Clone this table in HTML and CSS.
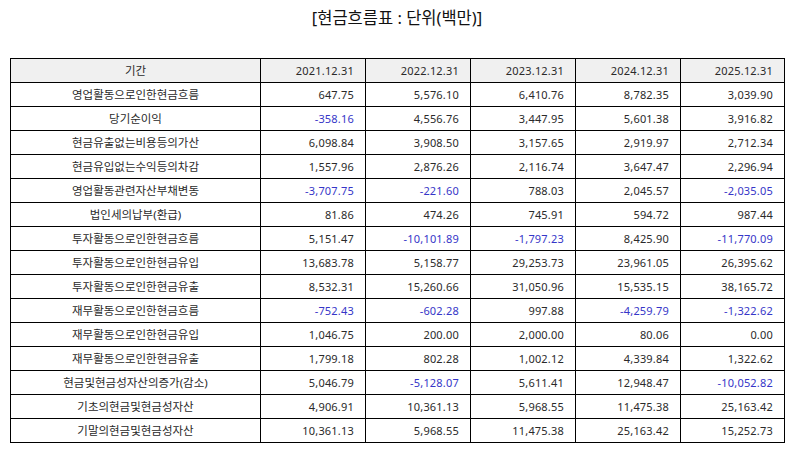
FILE: index.html
```html
<!DOCTYPE html>
<html lang="ko">
<head>
<meta charset="utf-8">
<link rel="stylesheet" href="styles.css">
</head>
<body>
<div class="page">
  <h1 class="title">[현금흐름표 : 단위(백만)]</h1>
  <table class="cf">
    <colgroup>
      <col class="c-label"><col class="c-num"><col class="c-num"><col class="c-num"><col class="c-num"><col class="c-last">
    </colgroup>
    <thead>
      <tr><th class="lbl">기간</th><th>2021.12.31</th><th>2022.12.31</th><th>2023.12.31</th><th>2024.12.31</th><th>2025.12.31</th></tr>
    </thead>
    <tbody>
      <tr><td class="lbl">영업활동으로인한현금흐름</td><td>647.75</td><td>5,576.10</td><td>6,410.76</td><td>8,782.35</td><td>3,039.90</td></tr>
      <tr><td class="lbl">당기순이익</td><td class="neg">-358.16</td><td>4,556.76</td><td>3,447.95</td><td>5,601.38</td><td>3,916.82</td></tr>
      <tr><td class="lbl">현금유출없는비용등의가산</td><td>6,098.84</td><td>3,908.50</td><td>3,157.65</td><td>2,919.97</td><td>2,712.34</td></tr>
      <tr><td class="lbl">현금유입없는수익등의차감</td><td>1,557.96</td><td>2,876.26</td><td>2,116.74</td><td>3,647.47</td><td>2,296.94</td></tr>
      <tr><td class="lbl">영업활동관련자산부채변동</td><td class="neg">-3,707.75</td><td class="neg">-221.60</td><td>788.03</td><td>2,045.57</td><td class="neg">-2,035.05</td></tr>
      <tr><td class="lbl">법인세의납부(환급)</td><td>81.86</td><td>474.26</td><td>745.91</td><td>594.72</td><td>987.44</td></tr>
      <tr><td class="lbl">투자활동으로인한현금흐름</td><td>5,151.47</td><td class="neg">-10,101.89</td><td class="neg">-1,797.23</td><td>8,425.90</td><td class="neg">-11,770.09</td></tr>
      <tr><td class="lbl">투자활동으로인한현금유입</td><td>13,683.78</td><td>5,158.77</td><td>29,253.73</td><td>23,961.05</td><td>26,395.62</td></tr>
      <tr><td class="lbl">투자활동으로인한현금유출</td><td>8,532.31</td><td>15,260.66</td><td>31,050.96</td><td>15,535.15</td><td>38,165.72</td></tr>
      <tr><td class="lbl">재무활동으로인한현금흐름</td><td class="neg">-752.43</td><td class="neg">-602.28</td><td>997.88</td><td class="neg">-4,259.79</td><td class="neg">-1,322.62</td></tr>
      <tr><td class="lbl">재무활동으로인한현금유입</td><td>1,046.75</td><td>200.00</td><td>2,000.00</td><td>80.06</td><td>0.00</td></tr>
      <tr><td class="lbl">재무활동으로인한현금유출</td><td>1,799.18</td><td>802.28</td><td>1,002.12</td><td>4,339.84</td><td>1,322.62</td></tr>
      <tr><td class="lbl">현금및현금성자산의증가(감소)</td><td>5,046.79</td><td class="neg">-5,128.07</td><td>5,611.41</td><td>12,948.47</td><td class="neg">-10,052.82</td></tr>
      <tr><td class="lbl">기초의현금및현금성자산</td><td>4,906.91</td><td>10,361.13</td><td>5,968.55</td><td>11,475.38</td><td>25,163.42</td></tr>
      <tr><td class="lbl">기말의현금및현금성자산</td><td>10,361.13</td><td>5,968.55</td><td>11,475.38</td><td>25,163.42</td><td>15,252.73</td></tr>
    </tbody>
  </table>
</div>
</body>
</html>
```

FILE: styles.css
```css
html, body {
  margin: 0;
  padding: 0;
  background: #ffffff;
}
body {
  font-family: "Noto Sans", "Noto Sans CJK KR", sans-serif;
  color: #2a2a2a;
}
.page {
  padding: 0 10px;
}
.title {
  margin: 0;
  height: 58px;
  box-sizing: border-box;
  padding-top: 5px;
  font-size: 16.5px;
  font-weight: normal;
  text-align: center;
  line-height: 26px;
  color: #111111;
}
.cf {
  width: 774px;
  border-collapse: collapse;
  table-layout: fixed;
  font-size: 11px;
}
.c-label { width: 250px; }
.c-num { width: 105px; }
.c-last { width: 104px; }
.cf th, .cf td {
  border: 1px solid #000000;
  height: 24px;
  padding: 0 11px 0 7px;
  text-align: right;
  font-weight: normal;
  line-height: 14px;
  white-space: nowrap;
  box-sizing: border-box;
  letter-spacing: 0.2px;
}
.cf th {
  background: #f0f0f0;
}
.cf .lbl {
  text-align: center;
  padding: 0 4px;
  font-size: 11.5px;
  letter-spacing: 0;
}
.cf .neg {
  color: #3636c8;
}
```
